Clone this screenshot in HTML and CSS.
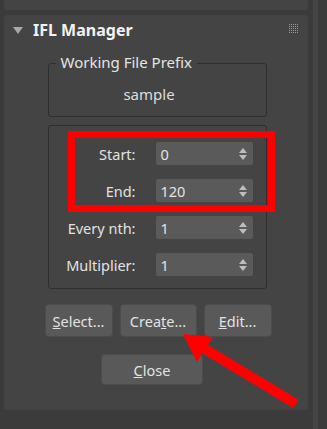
FILE: index.html
```html
<!DOCTYPE html>
<html lang="en">
<head>
    <meta charset="UTF-8">
    <meta name="viewport" content="width=device-width, initial-scale=1.0">
    <title>IFL Manager</title>
    <link rel="stylesheet" href="styles.css">
</head>
<body>
    <div class="page">
        <div class="column">
            <div class="prev-rollout"></div>
            <div class="rollout">
                <div class="rollout-header">
                    <span class="arrow-down"></span>
                    <span class="title">IFL Manager</span>
                    <span class="grip"></span>
                </div>

                <div class="group prefix-group">
                    <span class="group-label">Working File Prefix</span>
                    <div class="prefix-value">sample</div>
                </div>

                <div class="group range-group">
                    <div class="row">
                        <label>Start:</label>
                        <div class="spinner"><span class="val">0</span><span class="updown"></span></div>
                    </div>
                    <div class="row">
                        <label>End:</label>
                        <div class="spinner"><span class="val">120</span><span class="updown"></span></div>
                    </div>
                    <div class="row">
                        <label>Every nth:</label>
                        <div class="spinner"><span class="val">1</span><span class="updown"></span></div>
                    </div>
                    <div class="row">
                        <label>Multiplier:</label>
                        <div class="spinner"><span class="val">1</span><span class="updown"></span></div>
                    </div>
                    <div class="highlight"></div>
                </div>

                <div class="button-row">
                    <button class="btn btn-select"><u>S</u>elect...</button>
                    <button class="btn btn-create">Crea<u>t</u>e...</button>
                    <button class="btn btn-edit"><u>E</u>dit...</button>
                </div>
                <div class="button-row close-row">
                    <button class="btn btn-close"><u>C</u>lose</button>
                </div>
            </div>
        </div>
        <div class="scroll">
            <div class="scroll-track"></div>
        </div>

        <svg class="pointer" width="327" height="429" viewBox="0 0 327 429">
            <line x1="296" y1="404" x2="200" y2="346" stroke="#ff0000" stroke-width="10"/>
            <polygon points="183,334 213,337 197,362" fill="#ff0000"/>
        </svg>
    </div>
</body>
</html>
```

FILE: styles.css
```css
body {
    margin: 0;
    background-color: #3b3b3b;
    font-family: 'Noto Sans', sans-serif;
    color: #dedede;
}
.page {
    position: relative;
    display: flex;
    width: 327px;
    height: 429px;
    overflow: hidden;
}
.column {
    width: 308px;
    display: flex;
    flex-direction: column;
}
.prev-rollout {
    height: 10px;
    margin-left: 4px;
    background-color: #444444;
    border-radius: 0 0 3px 3px;
}
.rollout {
    margin: 5px 0 0 4px;
    height: 395px;
    background-color: #444444;
    border-radius: 3px;
    display: flex;
    flex-direction: column;
    align-items: center;
}
.rollout-header {
    position: relative;
    align-self: stretch;
    height: 30px;
    display: flex;
    align-items: center;
}
.arrow-down {
    width: 0;
    height: 0;
    margin-left: 9px;
    border-left: 5px solid transparent;
    border-right: 5px solid transparent;
    border-top: 7px solid #a8a8a8;
}
.title {
    margin-left: 10px;
    font-weight: bold;
    font-size: 16px;
    color: #f2f2f2;
}
.grip {
    position: absolute;
    right: 10px;
    top: 8px;
    width: 10px;
    height: 10px;
    background-color: #9a9a9a;
    background-image: linear-gradient(90deg, #444444 1px, transparent 1px), linear-gradient(#444444 1px, transparent 1px);
    background-size: 2px 2px;
}
.group {
    position: relative;
    width: 217px;
    margin-left: 2px;
    border: 1px solid #2e2e2e;
    border-radius: 3px;
}
.prefix-group {
    margin-top: 18px;
    height: 52px;
}
.group-label {
    position: absolute;
    left: 7px;
    top: -12px;
    padding: 0 5px;
    background-color: #444444;
    font-size: 15px;
    color: #e4e4e4;
}
.prefix-value {
    text-align: center;
    margin-top: 20px;
    padding-right: 16px;
    font-size: 15px;
}
.range-group {
    margin-top: 8px;
    padding: 16px 0 12px;
    display: flex;
    flex-direction: column;
    gap: 14px;
}
.row {
    display: flex;
    align-items: center;
    height: 23px;
}
.row label {
    width: 87px;
    text-align: right;
    font-size: 14.5px;
    color: #e2e2e2;
}
.spinner {
    margin-left: 20px;
    width: 97px;
    height: 23px;
    background-color: #5a5a5a;
    border-radius: 2px;
    display: flex;
    align-items: center;
    justify-content: space-between;
}
.val {
    margin-left: 5px;
    font-size: 14.5px;
    color: #e4e4e4;
}
.updown {
    position: relative;
    width: 8px;
    height: 12px;
    margin-right: 6px;
}
.updown::before, .updown::after {
    content: '';
    position: absolute;
    left: 0;
    border-left: 4px solid transparent;
    border-right: 4px solid transparent;
}
.updown::before {
    top: 0;
    border-bottom: 5px solid #bdbdbd;
}
.updown::after {
    bottom: 0;
    border-top: 5px solid #bdbdbd;
}
.highlight {
    position: absolute;
    left: 19px;
    top: 5px;
    width: 193px;
    height: 67px;
    border: 7px solid #ff0000;
}
.button-row {
    display: flex;
    gap: 7px;
    margin-top: 15px;
    margin-left: 4px;
}
.close-row {
    margin-top: 17px;
    margin-left: -8px;
}
.btn {
    height: 33px;
    padding: 0;
    background-color: #595959;
    border: 1px solid #4c4c4c;
    border-radius: 4px;
    color: #e2e2e2;
    font-family: 'Noto Sans', sans-serif;
    font-size: 14.5px;
}
.btn-select { width: 68px; }
.btn-create { width: 77px; }
.btn-edit { width: 68px; }
.btn-close {
    width: 102px;
    height: 31px;
}
.scroll {
    flex: 1;
    display: flex;
    padding-left: 5px;
}
.scroll-track {
    width: 5px;
    background-color: #454545;
}
.pointer {
    position: absolute;
    left: 0;
    top: 0;
    pointer-events: none;
}
```
